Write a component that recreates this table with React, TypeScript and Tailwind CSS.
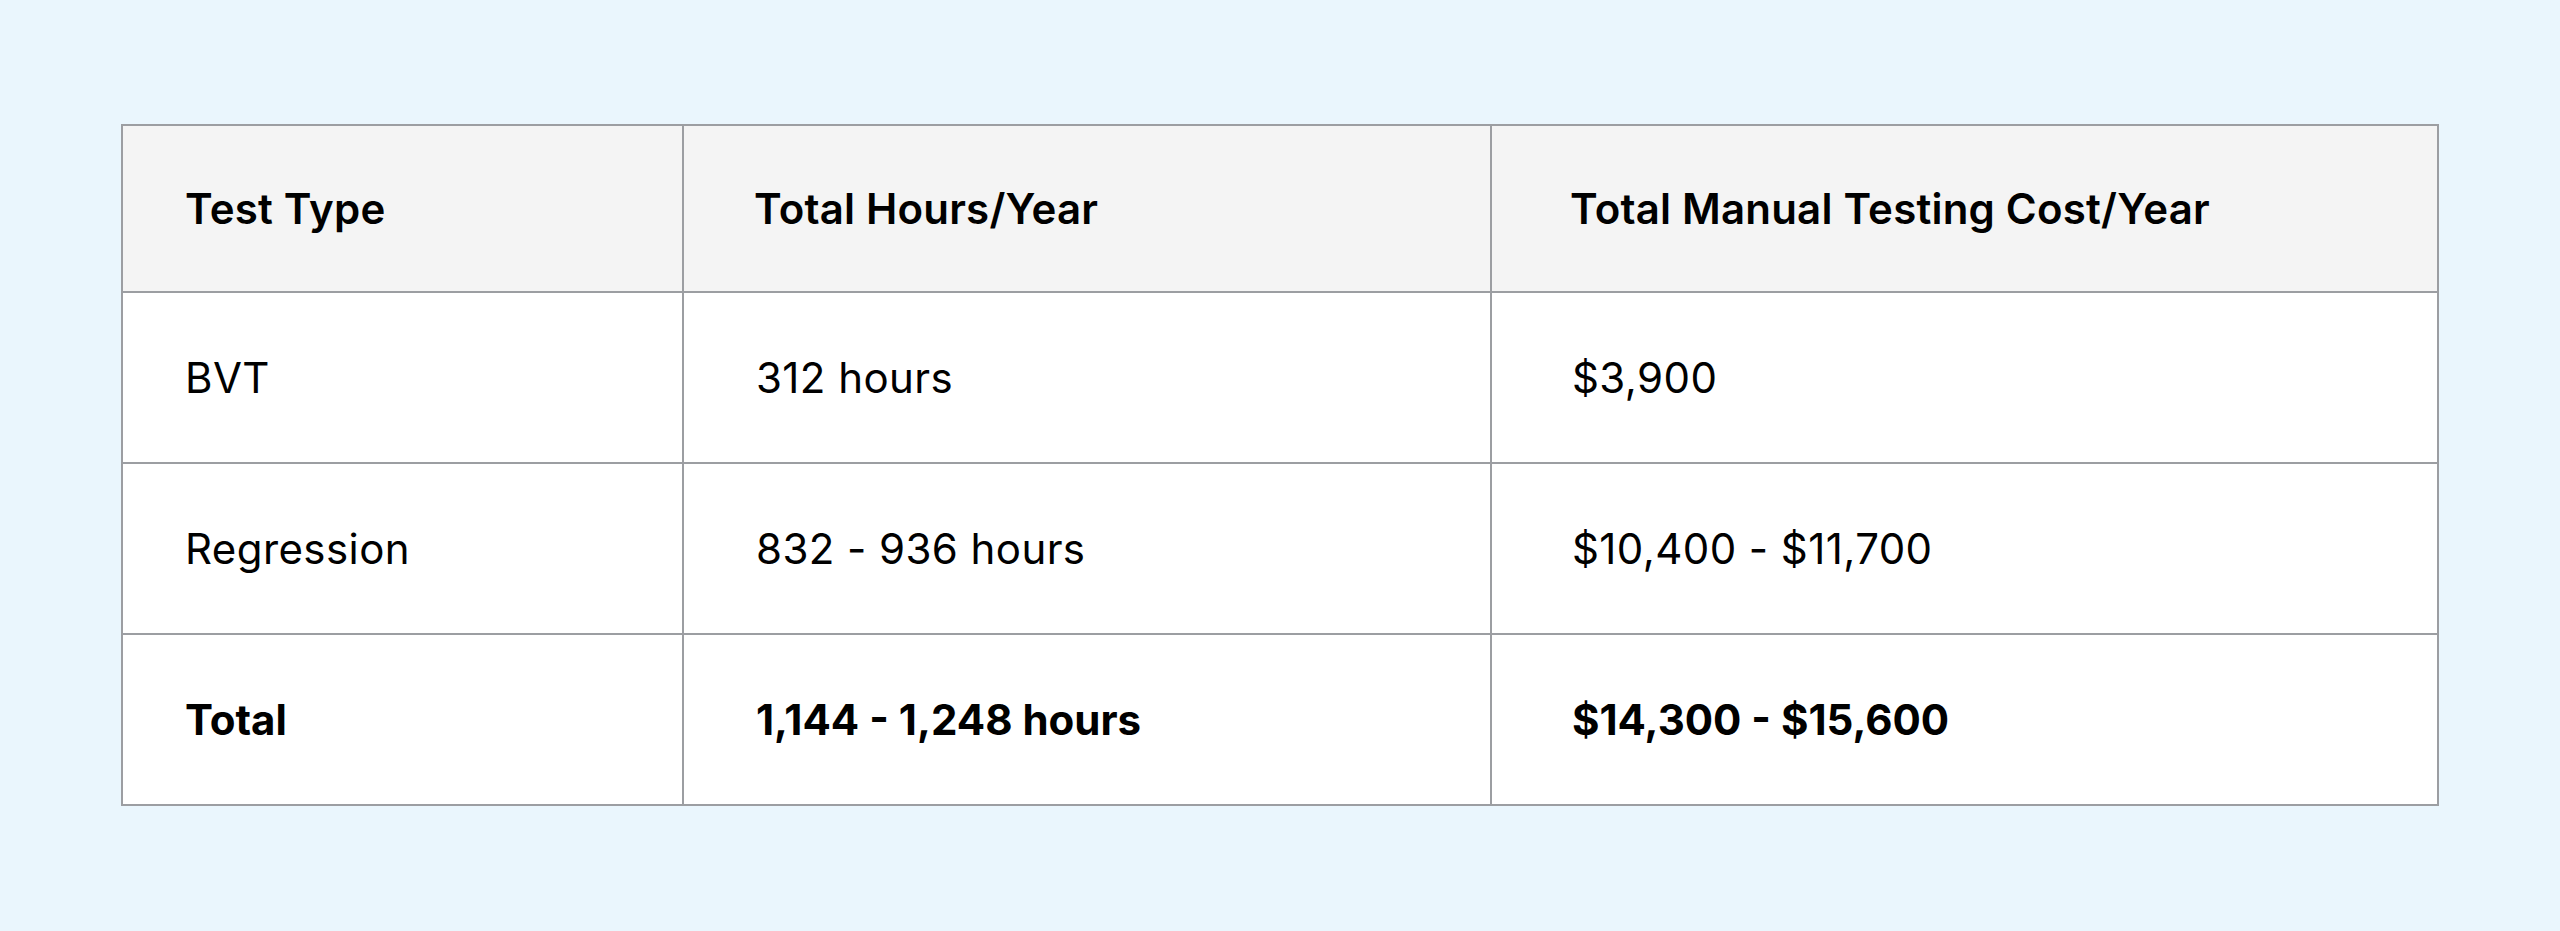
import React from 'react';

type Row = { type: string; hours: string; cost: string; bold?: boolean };

const rows: Row[] = [
  { type: 'BVT', hours: '312 hours', cost: '$3,900' },
  { type: 'Regression', hours: '832 - 936 hours', cost: '$10,400 - $11,700' },
  { type: 'Total', hours: '1,144 - 1,248 hours', cost: '$14,300 - $15,600', bold: true },
];

const cell = 'border-2 border-[#9c9ea2] align-middle text-left';

const App: React.FC = () => {
  return (
    <div className="min-h-[931px] w-full bg-[#eaf6fd] pt-[124px] pl-[121px] font-['Inter',sans-serif] text-[42px] leading-none text-black">
      <table className="w-[2316px] table-fixed border-collapse bg-white">
        <colgroup>
          <col className="w-[561px]" />
          <col className="w-[808px]" />
          <col className="w-[947px]" />
        </colgroup>
        <thead>
          <tr className="h-[167px] bg-[#f4f4f4]">
            <th className={`${cell} pl-[62px] font-semibold tracking-[0.005em]`}>Test Type</th>
            <th className={`${cell} pl-[70px] font-semibold tracking-[0.005em]`}>Total Hours/Year</th>
            <th className={`${cell} pl-[78px] font-semibold tracking-[0.005em]`}>Total Manual Testing Cost/Year</th>
          </tr>
        </thead>
        <tbody>
          {rows.map((r) => {
            const weight = r.bold ? 'font-bold tracking-normal' : 'font-normal tracking-[0.01em]';
            return (
              <tr key={r.type} className="h-[171px]">
                <td className={`${cell} pl-[62px] ${weight}`}>{r.type}</td>
                <td className={`${cell} pl-[72px] ${weight}`}>{r.hours}</td>
                <td className={`${cell} pl-[80px] ${weight}`}>{r.cost}</td>
              </tr>
            );
          })}
        </tbody>
      </table>
    </div>
  );
};

export default App;
